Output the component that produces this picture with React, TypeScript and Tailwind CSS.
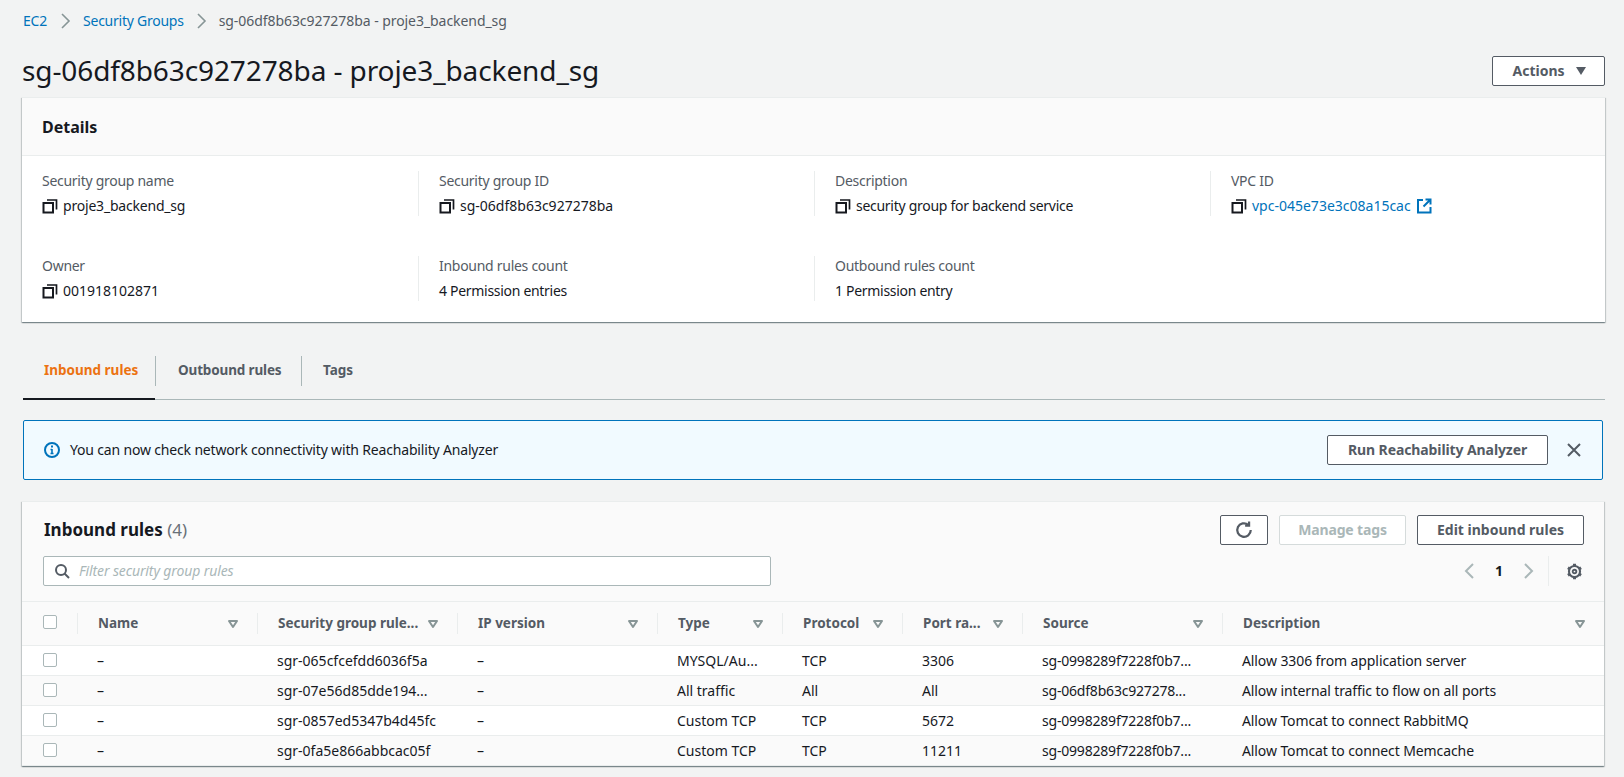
const DETAILS = [
  [
    { label: 'Security group name', value: 'proje3_backend_sg', copy: true, tight: 'tracking-[-0.2px]' },
    { label: 'Security group ID', value: 'sg-06df8b63c927278ba', copy: true },
    { label: 'Description', value: 'security group for backend service', copy: true, tight: 'tracking-[-0.28px]' },
    { label: 'VPC ID', value: 'vpc-045e73e3c08a15cac', copy: true, link: true },
  ],
  [
    { label: 'Owner', value: '001918102871', copy: true },
    { label: 'Inbound rules count', value: '4 Permission entries', tight: 'tracking-[-0.3px]' },
    { label: 'Outbound rules count', value: '1 Permission entry', tight: 'tracking-[-0.3px]' },
  ],
];

const COLUMNS = [
  { label: 'Name', w: 'w-[180px]' },
  { label: 'Security group rule...', w: 'w-[200px]' },
  { label: 'IP version', w: 'w-[200px]' },
  { label: 'Type', w: 'w-[125px]' },
  { label: 'Protocol', w: 'w-[120px]' },
  { label: 'Port ra...', w: 'w-[120px]' },
  { label: 'Source', w: 'w-[200px]' },
  { label: 'Description', w: 'w-auto' },
];

const RULES = [
  ['–', 'sgr-065cfcefdd6036f5a', '–', 'MYSQL/Au...', 'TCP', '3306', 'sg-0998289f7228f0b7...', 'Allow 3306 from application server'],
  ['–', 'sgr-07e56d85dde194...', '–', 'All traffic', 'All', 'All', 'sg-06df8b63c927278...', 'Allow internal traffic to flow on all ports'],
  ['–', 'sgr-0857ed5347b4d45fc', '–', 'Custom TCP', 'TCP', '5672', 'sg-0998289f7228f0b7...', 'Allow Tomcat to connect RabbitMQ'],
  ['–', 'sgr-0fa5e866abbcac05f', '–', 'Custom TCP', 'TCP', '11211', 'sg-0998289f7228f0b7...', 'Allow Tomcat to connect Memcache'],
];

function CopyIcon() {
  return (
    <svg viewBox="0 0 16 16" className="h-4 w-4 shrink-0" fill="none" stroke="#16191f" strokeWidth="2">
      <rect x="1.5" y="5" width="9.5" height="9.5" />
      <path d="M5 2h9.5v9.5" strokeWidth="1.7" />
    </svg>
  );
}

function ExternalIcon() {
  return (
    <svg viewBox="0 0 16 16" className="h-4 w-4 shrink-0" fill="none" stroke="#0073bb" strokeWidth="2">
      <path d="M7 2H2v12.5h12.5V9" />
      <path d="M9.5 1.5h5v5M14.5 1.5 7.5 8.5" />
    </svg>
  );
}

function GearIcon() {
  return (
    <svg viewBox="0 0 16 16" className="h-[17px] w-[17px]" fill="none" stroke="#545b64">
      <circle cx="8" cy="8" r="5.2" strokeWidth="2" />
      <circle cx="8" cy="8" r="1.7" strokeWidth="1.8" />
      <path d="M8 .8v2M8 13.2v2M14.2 4.4l-1.7 1M3.5 10.6l-1.7 1M14.2 11.6l-1.7-1M3.5 5.4l-1.7-1" strokeWidth="2.8" />
    </svg>
  );
}

function BreadcrumbChevron() {
  return (
    <svg viewBox="0 0 16 16" className="mx-[10px] h-4 w-4" fill="none" stroke="#879596" strokeWidth="1.6">
      <path d="m5 1 7 7-7 7" />
    </svg>
  );
}

function FilterCaret() {
  return (
    <svg viewBox="0 0 12 10" className="h-[10px] w-3 shrink-0" fill="#fafafa" stroke="#879596" strokeWidth="2" strokeLinejoin="round">
      <path d="M2 2h8L6 8z" />
    </svg>
  );
}

function OutlineButton({ children, disabled = false, className = '' }: { children: React.ReactNode; disabled?: boolean; className?: string }) {
  return (
    <button
      className={`flex h-[30px] items-center justify-center rounded-[2px] border bg-white text-sm font-bold ${disabled ? 'border-[#d5dbdb] text-[#aab7b8]' : 'border-[#545b64] text-[#545b64]'} ${className}`}
    >
      {children}
    </button>
  );
}

function Checkbox() {
  return <input type="checkbox" className="block h-[14px] w-[14px] appearance-none rounded-[2px] border border-[#aab7b8] bg-white" />;
}

export default function App() {
  return (
    <div className="h-[777px] overflow-hidden bg-[#f2f3f3] pl-[22px] pr-[19px] font-['Noto_Sans',sans-serif] text-sm text-[#16191f]">
      {/* Breadcrumbs */}
      <nav className="flex h-[42px] items-center pl-px">
        <span className="tracking-[-0.2px] text-[#0073bb]">EC2</span>
        <BreadcrumbChevron />
        <span className="tracking-[-0.25px] text-[#0073bb]">Security Groups</span>
        <span className="-ml-px flex">
          <BreadcrumbChevron />
        </span>
        <span className="tracking-[-0.06px] text-[#545b64]">sg-06df8b63c927278ba - proje3_backend_sg</span>
      </nav>

      <div className="mb-[11px] mt-[14px] flex h-[30px] items-center justify-between">
        <h1 className="-mt-[2px] text-[28px] font-normal leading-[30px] tracking-[-0.1px]">sg-06df8b63c927278ba - proje3_backend_sg</h1>
        <OutlineButton className="w-[113px] gap-[10px] pl-[2px]">
          Actions
          <svg viewBox="0 0 12 10" className="h-[10px] w-3" fill="#545b64">
            <path d="M1 1h10L6 9z" />
          </svg>
        </OutlineButton>
      </div>

      {/* Details */}
      <section className="h-[225px] border-t border-[#eaeded] bg-white shadow-[0_1px_1px_0_rgba(0,28,36,0.3),1px_1px_1px_0_rgba(0,28,36,0.15),-1px_1px_1px_0_rgba(0,28,36,0.15)]">
        <div className="flex h-[58px] items-center border-b border-[#eaeded] bg-[#fafafa] px-5">
          <h2 className="text-base font-bold">Details</h2>
        </div>
        <div className="grid grid-cols-[396px_396px_396px_1fr] gap-y-10 pt-[15px]">
          {DETAILS.map((row) =>
            row.map((item, i) => (
              <div key={item.label} className={`h-[45px] ${i === 0 ? 'pl-5' : 'border-l border-[#eaeded] pl-5'}`}>
                <div className="-mt-px leading-[22px] tracking-[-0.28px] text-[#545b64]">{item.label}</div>
                <div className="mt-1 flex items-center gap-[5px] leading-5">
                  {item.copy && <CopyIcon />}
                  <span className={`${item.link ? 'text-[#0073bb]' : ''} ${item.tight ?? ''}`}>{item.value}</span>
                  {item.link && <ExternalIcon />}
                </div>
              </div>
            )),
          )}
        </div>
      </section>

      {/* Tabs */}
      <div className="relative ml-px mt-[34px] flex border-b border-[#aab7b8] pb-[13px] text-[13.5px] font-bold text-[#545b64]">
        <div className="flex h-[30px] w-[133px] items-center border-r border-[#aab7b8] pl-[21px] text-[#ec7211]">Inbound rules</div>
        <div className="flex h-[30px] w-[146px] items-center border-r border-[#aab7b8] pl-[22px] tracking-[-0.15px]">Outbound rules</div>
        <div className="flex h-[30px] items-center pl-[21px]">Tags</div>
        <span className="absolute -bottom-px left-0 h-[2px] w-[132px] bg-[#16191f]" />
      </div>

      {/* Flash */}
      <div className="ml-px mr-[2px] mt-5 flex h-[60px] items-center rounded-[2px] border border-[#0073bb] bg-[#f1faff] pl-5 pr-5">
        <svg viewBox="0 0 16 16" className="mr-[10px] h-4 w-4" fill="none" stroke="#0073bb" strokeWidth="2">
          <circle cx="8" cy="8" r="7" />
          <path d="M8 7v5M6.5 11.5h3M6.5 7.5H8" strokeWidth="1.6" />
          <path d="M8 3.6v1.8" />
        </svg>
        <span className="tracking-[-0.17px]">You can now check network connectivity with Reachability Analyzer</span>
        <OutlineButton className="ml-auto w-[221px] tracking-[-0.1px]">Run Reachability Analyzer</OutlineButton>
        <svg viewBox="0 0 16 16" className="ml-[18px] h-4 w-4" fill="none" stroke="#545b64" strokeWidth="2">
          <path d="m2 2 12 12M14 2 2 14" />
        </svg>
      </div>

      {/* Rules table */}
      <section className="mr-px mt-[21px] border-t border-[#eaeded] bg-[#fafafa] shadow-[0_1px_1px_0_rgba(0,28,36,0.3),1px_1px_1px_0_rgba(0,28,36,0.15),-1px_1px_1px_0_rgba(0,28,36,0.15)]">
        <div className="h-[99px] pl-[21px] pr-5 pt-[13px]">
          <div className="flex h-[30px] items-center">
            <h2 className="ml-px text-[17px] font-bold">
              Inbound rules <span className="font-normal text-[#687078]">(4)</span>
            </h2>
            <div className="ml-auto flex gap-[11px]">
              <OutlineButton className="w-[48px]">
                <svg viewBox="0 0 16 16" className="h-[18px] w-[18px]" fill="none" stroke="#545b64" strokeWidth="2">
                  <path d="M14 8a6 6 0 1 1-2.2-4.6" />
                  <path d="M12.5 0.5v3.5H9" />
                </svg>
              </OutlineButton>
              <OutlineButton disabled className="w-[127px] tracking-[-0.15px]">Manage tags</OutlineButton>
              <OutlineButton className="w-[167px]">Edit inbound rules</OutlineButton>
            </div>
          </div>
          <div className="mt-[11px] flex h-[30px] items-center">
            <div className="flex h-[30px] w-[728px] items-center rounded-[2px] border border-[#aab7b8] bg-white pl-[10px]">
              <svg viewBox="0 0 16 16" className="h-4 w-4" fill="none" stroke="#545b64" strokeWidth="2">
                <circle cx="7" cy="7" r="5" />
                <path d="m10.5 10.5 4.5 4.5" />
              </svg>
              <span className="ml-[9px] italic tracking-[-0.12px] text-[#aab7b8]">Filter security group rules</span>
            </div>
            <div className="ml-auto flex h-[30px] items-center">
              <svg viewBox="0 0 16 16" className="h-4 w-4" fill="none" stroke="#aab7b8" strokeWidth="2">
                <path d="m11 1-7 7 7 7" />
              </svg>
              <span className="mx-[17px] font-bold">1</span>
              <svg viewBox="0 0 16 16" className="h-4 w-4" fill="none" stroke="#aab7b8" strokeWidth="2">
                <path d="m5 1 7 7-7 7" />
              </svg>
              <div className="ml-[12px] flex h-[30px] w-[36px] items-center justify-end border-l border-[#eaeded] pr-px">
                <GearIcon />
              </div>
            </div>
          </div>
        </div>

        <table className="w-full table-fixed border-collapse">
          <thead>
            <tr className="h-[44px] border-y border-[#eaeded]">
              <th className="w-[55px] pb-1 pl-[21px] text-left">
                <Checkbox />
              </th>
              {COLUMNS.map((col) => (
                <th key={col.label} className={`p-0 ${col.w}`}>
                  <div className="flex h-[21px] items-center justify-between border-l border-[#eaeded] pl-5 pr-[18px] text-[13.5px] font-bold text-[#545b64]">
                    <span className="mt-px whitespace-nowrap">{col.label}</span>
                    <FilterCaret />
                  </div>
                </th>
              ))}
            </tr>
          </thead>
          <tbody>
            {RULES.map((rule, r) => (
              <tr key={rule[1]} className={`h-[30px] border-b border-[#eaeded] ${r % 2 === 0 ? 'bg-white' : 'bg-[#fafafa]'}`}>
                <td className="pb-[2px] pl-[21px]">
                  <Checkbox />
                </td>
                {rule.map((cell, c) => (
                  <td
                    key={c}
                    className={`overflow-hidden whitespace-nowrap pl-5 ${c === 6 ? 'tracking-[-0.2px]' : c === 7 ? 'tracking-[-0.1px]' : ''}`}
                  >
                    {cell}
                  </td>
                ))}
              </tr>
            ))}
          </tbody>
        </table>
      </section>
    </div>
  );
}
